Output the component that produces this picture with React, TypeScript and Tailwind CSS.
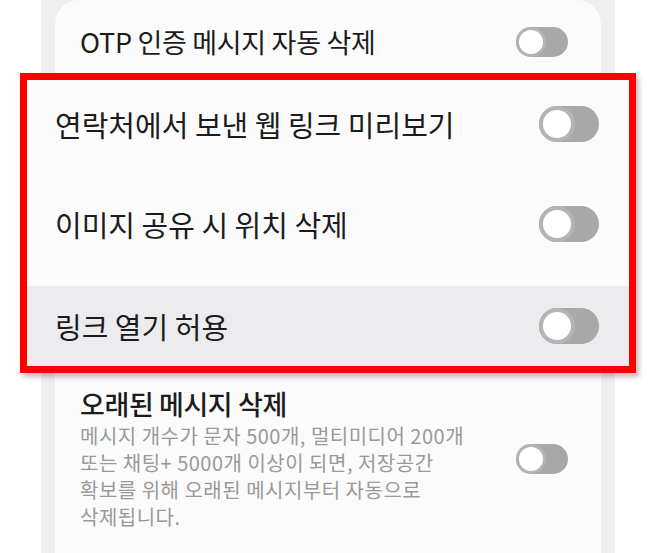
function Toggle({ big = false }: { big?: boolean }) {
  return (
    <div
      className={
        big
          ? "flex h-[36px] w-[60px] items-center rounded-full bg-[#a8a8a8]"
          : "flex h-[30px] w-[52px] items-center rounded-full bg-[#a8a8a8]"
      }
    >
      <div
        className={
          big
            ? "h-[36px] w-[36px] rounded-full border-[4px] border-[#b4b4b4] bg-white"
            : "h-[30px] w-[30px] rounded-full border-[3px] border-[#b4b4b4] bg-white"
        }
      />
    </div>
  );
}

const descLines = [
  "메시지 개수가 문자 500개, 멀티미디어 200개",
  "또는 채팅+ 5000개 이상이 되면, 저장공간",
  "확보를 위해 오래된 메시지부터 자동으로",
  "삭제됩니다.",
];

export default function App() {
  const font = { fontFamily: '"Noto Sans CJK KR", "Noto Sans", sans-serif' };
  return (
    <div className="flex h-[553px] w-[656px] flex-col overflow-hidden bg-white" style={font}>
      {/* top card row */}
      <div className="ml-[41px] h-[73px] w-[574px] shrink-0 bg-[#efeff2] px-[14px]">
        <div className="flex h-full items-center justify-between rounded-t-[24px] bg-[#fbfbfb] pl-[25px] pr-[33px] pt-[10px]">
          <span className="text-[27px] leading-none tracking-[-0.3px] text-[#1c1c1c]">OTP 인증 메시지 자동 삭제</span>
          <Toggle />
        </div>
      </div>

      {/* highlighted callout */}
      <div className="relative z-10 mx-[20px] flex h-[300px] shrink-0 flex-col border-[7px] border-[#ff0000] bg-[#fbfbfb] shadow-[3px_4px_5px_rgba(0,0,0,0.25)]">
        <div className="flex h-[88px] items-center justify-between pl-[28px] pr-[30px]">
          <span className="text-[29px] leading-none text-[#1c1c1c]">연락처에서 보낸 웹 링크 미리보기</span>
          <Toggle big />
        </div>
        <div className="flex h-[118px] items-center justify-between pb-[6px] pl-[28px] pr-[30px]">
          <span className="text-[29px] leading-none text-[#1c1c1c]">이미지 공유 시 위치 삭제</span>
          <Toggle big />
        </div>
        <div className="flex flex-1 items-center justify-between bg-[#ececef] pl-[28px] pr-[30px]">
          <span className="text-[29px] leading-none text-[#1c1c1c]">링크 열기 허용</span>
          <Toggle big />
        </div>
      </div>

      {/* bottom card row */}
      <div className="ml-[41px] w-[574px] flex-1 bg-[#efeff2] px-[14px]">
        <div className="flex h-full items-start justify-between bg-[#fbfbfb] pl-[25px] pr-[33px] pt-[14px]">
          <div className="flex flex-col">
            <span className="text-[27px] font-medium leading-[34px] tracking-[-0.4px] text-[#1c1c1c]">오래된 메시지 삭제</span>
            <div className="mt-[1px] flex flex-col">
              {descLines.map((line) => (
                <div key={line} className="h-[27px] whitespace-nowrap text-[20px] leading-[27px] tracking-[0.5px] text-[#999999]">
                  {line}
                </div>
              ))}
            </div>
          </div>
          <div className="mt-[57px]">
            <Toggle />
          </div>
        </div>
      </div>
    </div>
  );
}
